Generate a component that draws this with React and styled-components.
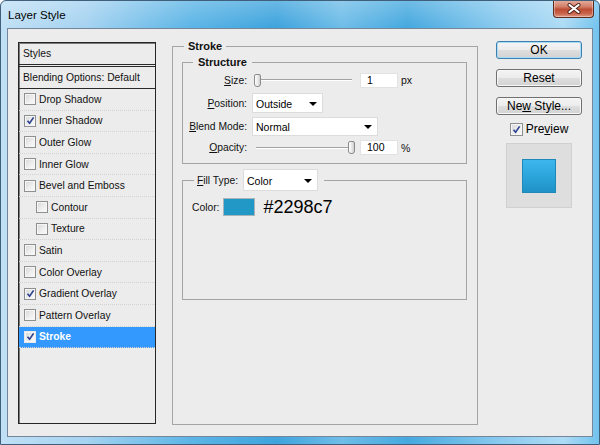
import React from 'react';
import styled, { createGlobalStyle } from 'styled-components';

const Global = createGlobalStyle`
  html, body { margin: 0; padding: 0; background: #ffffff; }
  body { width: 600px; height: 445px; overflow: hidden; font-family: "Liberation Sans", Arial, sans-serif; }
  * { box-sizing: border-box; }
`;

const Window = styled.div`
  width: 600px;
  height: 445px;
  display: flex;
  flex-direction: column;
  border: 1px solid #3f5f7a;
  border-radius: 6px 6px 0 0;
  overflow: hidden;
  background:
    linear-gradient(180deg, rgba(255,255,255,0.22) 0px, rgba(255,255,255,0) 26px),
    linear-gradient(90deg, #c0e0f5 0%, #a6d3f1 14%, #5cb5e6 32%, #3fa4dd 46%, #6fbde8 57%, #46a9df 68%, #8ccbef 84%, #aedbf5 94%, #72c3ee 100%);
`;

const TitleBar = styled.div`
  height: 27px;
  flex: none;
  display: flex;
  align-items: center;
  justify-content: space-between;
  padding-left: 7px;
  padding-right: 5px;
`;

const Title = styled.span`
  font-size: 11.5px;
  color: #000;
  padding-top: 1px;
`;

const CloseBtn = styled.div`
  align-self: flex-start;
  margin-top: -1px;
  width: 41px;
  height: 18px;
  border: 1px solid #5d2b20;
  border-top: none;
  border-radius: 0 0 4px 4px;
  background: linear-gradient(180deg, #e7b0a2 0%, #d27d68 40%, #bd4c33 55%, #c9654c 80%, #e09a85 100%);
  box-shadow: inset 0 0 0 1px rgba(255,255,255,0.35);
  display: flex;
  align-items: center;
  justify-content: center;
`;

const Body = styled.div`
  flex: 1;
  display: flex;
  padding: 0 6px 7px 6px;
`;

const Content = styled.div`
  flex: 1;
  display: flex;
  align-items: flex-start;
  border: 1px solid #76869a;
  background: #ececec;
  padding: 11px 0 0 10px;
  color: #111;
`;

const List = styled.div`
  width: 138px;
  height: 382px;
  margin-top: 2px;
  border: 1px solid #262626;
  box-shadow: inset 1px 1px 0 #7a7a7a;
  display: flex;
  flex-direction: column;
  font-size: 10.3px;
`;

const ListHeader = styled.div`
  height: ${p => p.$h}px;
  flex: none;
  display: flex;
  align-items: center;
  padding-left: 4px;
  border-bottom: ${p => p.$double ? '3px double #2a2a2a' : '1px solid #2a2a2a'};
`;

const Row = styled.div`
  height: 21.6px;
  flex: none;
  display: flex;
  align-items: center;
  gap: 3px;
  padding-left: ${p => 5 + (p.$indent ? 12 : 0)}px;
  border-bottom: 1px dotted #d2d2d2;
  background: ${p => p.$active ? '#3399ff' : 'transparent'};
  color: ${p => p.$active ? '#fff' : '#111'};
  font-weight: ${p => p.$active ? 'bold' : 'normal'};
`;

const Box = styled.span`
  width: ${p => p.$size || 12}px;
  height: ${p => p.$size || 12}px;
  flex: none;
  display: inline-flex;
  align-items: center;
  justify-content: center;
  border: 1px solid ${p => p.$light ? '#e8e8e8' : '#8e8f8f'};
  background: linear-gradient(135deg, #d6d6d6 0%, #eeeeee 55%, #fbfbfb 100%);
  box-shadow: inset 0 0 0 1px #f6f6f6;
`;

function Check({ checked, light, size }) {
  return (
    <Box $light={light} $size={size}>
      {checked && (
        <svg width="9" height="9" viewBox="0 0 9 9">
          <path d="M1.5 4.8 L3.6 7.2 L7.6 1.4" fill="none" stroke="#2a3f8f" strokeWidth="1.6" />
        </svg>
      )}
    </Box>
  );
}

const Group = styled.fieldset`
  margin: ${p => p.$mt || 0}px 0 0 ${p => p.$ml || 0}px;
  min-inline-size: 0;
  width: ${p => p.$w}px;
  height: ${p => p.$h}px;
  border: 1px solid #a4a4a4;
  padding: 0 ${p => p.$pr || 0}px 0 ${p => p.$pl || 0}px;
  display: block;
`;

const Legend = styled.legend`
  margin-left: ${p => p.$ml}px;
  padding: 0 ${p => p.$pr ?? p.$pl}px 0 ${p => p.$pl}px;
  font-size: 11px;
  line-height: 13px;
  font-weight: ${p => p.$bold ? 'bold' : 'normal'};
  color: #111;
`;

const FillLegend = styled.legend`
  margin-left: 11px;
  padding: 0 6px 0 3px;
  display: flex;
  align-items: center;
  gap: 5px;
  font-size: 10.3px;
  color: #111;
`;

const Rows = styled.div`
  display: flex;
  flex-direction: column;
  padding-top: 3px;
  font-size: 10.3px;
`;

const FormRow = styled.div`
  height: ${p => p.$h}px;
  margin-bottom: ${p => p.$mb || 0}px;
  display: flex;
  align-items: center;
`;

const Label = styled.span`
  width: 64px;
  flex: none;
  text-align: right;
  margin-right: 5px;
  white-space: nowrap;
`;

const SliderWrap = styled.div`
  position: relative;
  width: 104px;
  height: 15px;
  flex: none;
  display: flex;
  align-items: center;
  padding: 0 4px;
`;

const Track = styled.div`
  flex: 1;
  height: 2px;
  border-top: 1px solid #a2a2a2;
  border-bottom: 1px solid #ffffff;
`;

const Thumb = styled.div`
  position: absolute;
  top: 1px;
  width: 7px;
  height: 13px;
  border: 1px solid #8b8b8b;
  border-radius: 2px 2px 3px 3px;
  background: linear-gradient(90deg, #ffffff 0%, #e6e6e6 60%, #cfcfcf 100%);
`;

function Slider({ value }) {
  return (
    <SliderWrap>
      <Track />
      <Thumb style={{ left: `${1 + (95 * value) / 100}px` }} />
    </SliderWrap>
  );
}

const Input = styled.div`
  width: 38px;
  height: 15px;
  margin-left: 4px;
  padding-left: 6px;
  background: #fff;
  border: 1px solid #e2e2e2;
  font-size: 10.5px;
  line-height: 13px;
  color: #000;
`;

const Unit = styled.span`
  margin-left: 3px;
  font-size: 10.5px;
`;

const Select = styled.div`
  width: ${p => p.$w}px;
  height: ${p => p.$h}px;
  flex: none;
  background: #fff;
  border: 1px solid #dcdcdc;
  display: flex;
  align-items: center;
  justify-content: space-between;
  padding: 1px 5px 0 3px;
  font-size: 10.5px;
  color: #000;
`;

const Arrow = styled.span`
  width: 0;
  height: 0;
  border-left: 4px solid transparent;
  border-right: 4px solid transparent;
  border-top: 4px solid #000;
`;

const ColorRow = styled.div`
  margin-top: 6px;
  height: 20px;
  display: flex;
  align-items: center;
  padding-left: 9px;
  font-size: 10.3px;
`;

const Swatch = styled.span`
  width: 32px;
  height: 18px;
  margin-left: 4px;
  background: #2298c7;
  border: 1px solid #a9b3ba;
`;

const Hex = styled.span`
  margin-left: 8px;
  font-size: 18px;
  color: #000;
`;

const Side = styled.div`
  width: 86px;
  margin: 1px 0 0 18px;
  display: flex;
  flex-direction: column;
  align-items: center;
`;

const Button = styled.div`
  width: 86px;
  height: 18px;
  margin-bottom: 10px;
  border: 1px solid ${p => p.$default ? '#3c7fb1' : '#707070'};
  border-radius: 3px;
  background: linear-gradient(180deg, #f4f4f4 0%, #ececec 48%, #dedede 52%, #d2d2d2 100%);
  box-shadow: inset 0 0 0 1px ${p => p.$default ? '#a8dcf5' : '#f8f8f8'};
  font-size: 12px;
  line-height: 16px;
  text-align: center;
  color: #000;
`;

const PreviewRow = styled.div`
  margin-top: -3px;
  height: 14px;
  display: flex;
  align-items: center;
  gap: 3px;
  font-size: 12px;
  color: #000;
`;

const PreviewBox = styled.div`
  margin-top: 7px;
  width: 66px;
  height: 65px;
  border: 1px solid #d0d0d0;
  background: #dedede;
  display: flex;
  align-items: center;
  justify-content: center;
`;

const PreviewSwatch = styled.div`
  width: 34px;
  height: 34px;
  border: 1px solid #1d89b8;
  background: linear-gradient(180deg, #3cb6ec 0%, #2aa3da 55%, #1f92c6 100%);
`;

const items = [
  { name: 'Drop Shadow' },
  { name: 'Inner Shadow', checked: true },
  { name: 'Outer Glow' },
  { name: 'Inner Glow' },
  { name: 'Bevel and Emboss' },
  { name: 'Contour', indent: true },
  { name: 'Texture', indent: true },
  { name: 'Satin' },
  { name: 'Color Overlay' },
  { name: 'Gradient Overlay', checked: true },
  { name: 'Pattern Overlay' },
  { name: 'Stroke', checked: true, active: true },
];

export default function App() {
  return (
    <>
      <Global />
      <Window>
        <TitleBar>
          <Title>Layer Style</Title>
          <CloseBtn>
            <svg width="14" height="11" viewBox="0 0 14 11">
              <path d="M2.5 2 L11.5 9 M11.5 2 L2.5 9" stroke="#4d1f15" strokeWidth="4" strokeLinecap="round" />
              <path d="M2.5 2 L11.5 9 M11.5 2 L2.5 9" stroke="#ffffff" strokeWidth="2.2" strokeLinecap="round" />
            </svg>
          </CloseBtn>
        </TitleBar>
        <Body>
          <Content>
            <List>
              <ListHeader $h={24} $double>Styles</ListHeader>
              <ListHeader $h={22}>Blending Options: Default</ListHeader>
              {items.map(it => (
                <Row key={it.name} $indent={it.indent} $active={it.active}>
                  <Check checked={it.checked} light={it.active} />
                  <span>{it.name}</span>
                </Row>
              ))}
            </List>

            <Group $ml={16} $w={306} $h={385} $pl={9} $pr={10}>
              <Legend $ml={2} $pl={4} $bold>Stroke</Legend>

              <Group $mt={3} $w={285} $h={108}>
                <Legend $ml={10} $pl={5} $bold>Structure</Legend>
                <Rows>
                  <FormRow $h={16} $mb={4}>
                    <Label><u>S</u>ize:</Label>
                    <Slider value={1} />
                    <Input>1</Input>
                    <Unit>px</Unit>
                  </FormRow>
                  <FormRow $h={22} $mb={2}>
                    <Label><u>P</u>osition:</Label>
                    <Select $w={71} $h={20}>Outside<Arrow /></Select>
                  </FormRow>
                  <FormRow $h={21} $mb={2}>
                    <Label><u>B</u>lend Mode:</Label>
                    <Select $w={126} $h={19}>Normal<Arrow /></Select>
                  </FormRow>
                  <FormRow $h={17}>
                    <Label><u>O</u>pacity:</Label>
                    <Slider value={100} />
                    <Input>100</Input>
                    <Unit>%</Unit>
                  </FormRow>
                </Rows>
              </Group>

              <Group $mt={5} $w={285} $h={131}>
                <FillLegend>
                  <span><u>F</u>ill Type:</span>
                  <Select $w={75} $h={22}>Color<Arrow /></Select>
                </FillLegend>
                <ColorRow>
                  <span>Color:</span>
                  <Swatch />
                  <Hex>#2298c7</Hex>
                </ColorRow>
              </Group>
            </Group>

            <Side>
              <Button $default>OK</Button>
              <Button>Reset</Button>
              <Button>Ne<u>w</u> Style...</Button>
              <PreviewRow>
                <Check checked size={13} />
                <span>Pre<u>v</u>iew</span>
              </PreviewRow>
              <PreviewBox>
                <PreviewSwatch />
              </PreviewBox>
            </Side>
          </Content>
        </Body>
      </Window>
    </>
  );
}
